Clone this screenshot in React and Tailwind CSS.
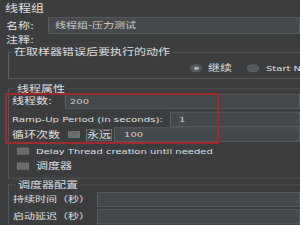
import { useState } from "react";

// JMeter thread group panel (darcula-like). Screenshot is squashed vertically,
// so the panel is laid out at natural height and scaled on y.

const Input = ({ value, className = "" }) => (
  <div
    className={
      "h-full flex items-center bg-[#46494b] border border-[#5d6062] text-[10px] text-[#d2d2d2] " +
      className
    }
  >
    {value}
  </div>
);

const Check = ({ className = "" }) => (
  <div className={"w-[12px] h-[9px] shrink-0 bg-[#686a6c] border border-[#727476] " + className} />
);

const Radio = ({ checked }) => (
  <div className="w-[12px] h-[10px] shrink-0 rounded-full bg-[#55585a] border border-[#626567] flex items-center justify-center">
    {checked && <div className="w-[5px] h-[4px] rounded-full bg-[#b8b8b8]" />}
  </div>
);

const Legend = ({ children, className = "" }) => (
  <legend className={"ml-[3px] px-[2px] text-[12px] leading-none flex items-center " + className}>
    {children}
  </legend>
);

export default function App() {
  const [forever] = useState(false);

  return (
    <div className="relative w-[300px] h-[225px] overflow-hidden bg-[#3b3d3f] text-[#e0e0e0] font-['DejaVu_Sans','Noto_Sans_CJK_SC',sans-serif]">
      <div className="h-[300px] origin-top scale-y-75 flex flex-col">
        {/* title */}
        <div className="h-[23px] shrink-0 flex items-center pl-[5px] text-[13px]">线程组</div>

        {/* name */}
        <div className="h-[22px] shrink-0 flex items-center">
          <div className="w-[48px] shrink-0 pl-[6px] text-[12px]">名称:</div>
          <Input value="线程组-压力测试" className="flex-1 pl-[6px] text-[11px] bg-[#4a4c4e]" />
        </div>

        {/* comment */}
        <div className="h-[16px] shrink-0 flex items-center pl-[6px] text-[12px]">注释:</div>

        {/* sampler error action */}
        <fieldset className="ml-[8px] border-l border-t border-b border-r-0 border-[#5f6163] shrink-0">
          <Legend className="h-[16px] whitespace-nowrap">在取样器错误后要执行的动作</Legend>
          <div className="h-[27px] flex items-center pl-[181px] text-[12px] whitespace-nowrap">
            <Radio checked />
            <span className="ml-[6px]">继续</span>
            <span className="ml-[15px]">
              <Radio />
            </span>
            <span className="ml-[7px] text-[10px]">Start Next Thread Loop</span>
          </div>
        </fieldset>

        {/* thread properties */}
        <fieldset className="mt-[6px] ml-[8px] pl-[3px] pb-[6px] border-l border-t border-b border-r-0 border-[#55585a] shrink-0">
          <Legend className="h-[14px]">线程属性</Legend>
          <div className="h-[20px] flex items-center">
            <div className="w-[53px] shrink-0 text-[12px]">线程数:</div>
            <Input value="200" className="flex-1 pl-[4px]" />
          </div>
          <div className="h-[20px] mt-[4px] flex items-center">
            <div className="w-[158px] shrink-0 text-[10.2px] whitespace-nowrap">Ramp-Up Period (in seconds):</div>
            <Input value="1" className="flex-1 pl-[8px]" />
          </div>
          <div className="h-[19px] mt-[1px] flex items-center">
            <div className="w-[56px] shrink-0 text-[12px]">循环次数</div>
            <Check className={forever ? "bg-[#8a8a8a]" : ""} />
            <span className="ml-[6px] border border-[#6c6e70] h-[16px] flex items-center text-[12px]">永远</span>
            <Input value="100" className="flex-1 ml-[2px] pl-[9px]" />
          </div>
          <div className="h-[20px] mt-[2px] flex items-center pl-[5px]">
            <Check />
            <span className="ml-[7px] text-[10px] whitespace-nowrap">Delay Thread creation until needed</span>
          </div>
          <div className="h-[20px] flex items-center pl-[5px]">
            <Check />
            <span className="ml-[7px] text-[12px]">调度器</span>
          </div>
        </fieldset>

        {/* scheduler config */}
        <fieldset className="mt-[2px] ml-[8px] pl-[4px] border-l border-t border-b-0 border-r-0 border-[#55585a] shrink-0">
          <Legend className="h-[12px]">调度器配置</Legend>
          <div className="h-[20px] mt-[4px] flex items-center">
            <div className="w-[84px] shrink-0 text-[11px]">持续时间（秒）</div>
            <Input value="" className="flex-1" />
          </div>
          <div className="h-[20px] mt-[3px] flex items-center">
            <div className="w-[84px] shrink-0 text-[11px]">启动延迟（秒）</div>
            <Input value="" className="flex-1" />
          </div>
        </fieldset>
      </div>

      {/* red highlight annotation */}
      <div className="absolute left-[5px] top-[93px] w-[214px] h-[51px] border-2 border-[#a22a2c] pointer-events-none" />
    </div>
  );
}
